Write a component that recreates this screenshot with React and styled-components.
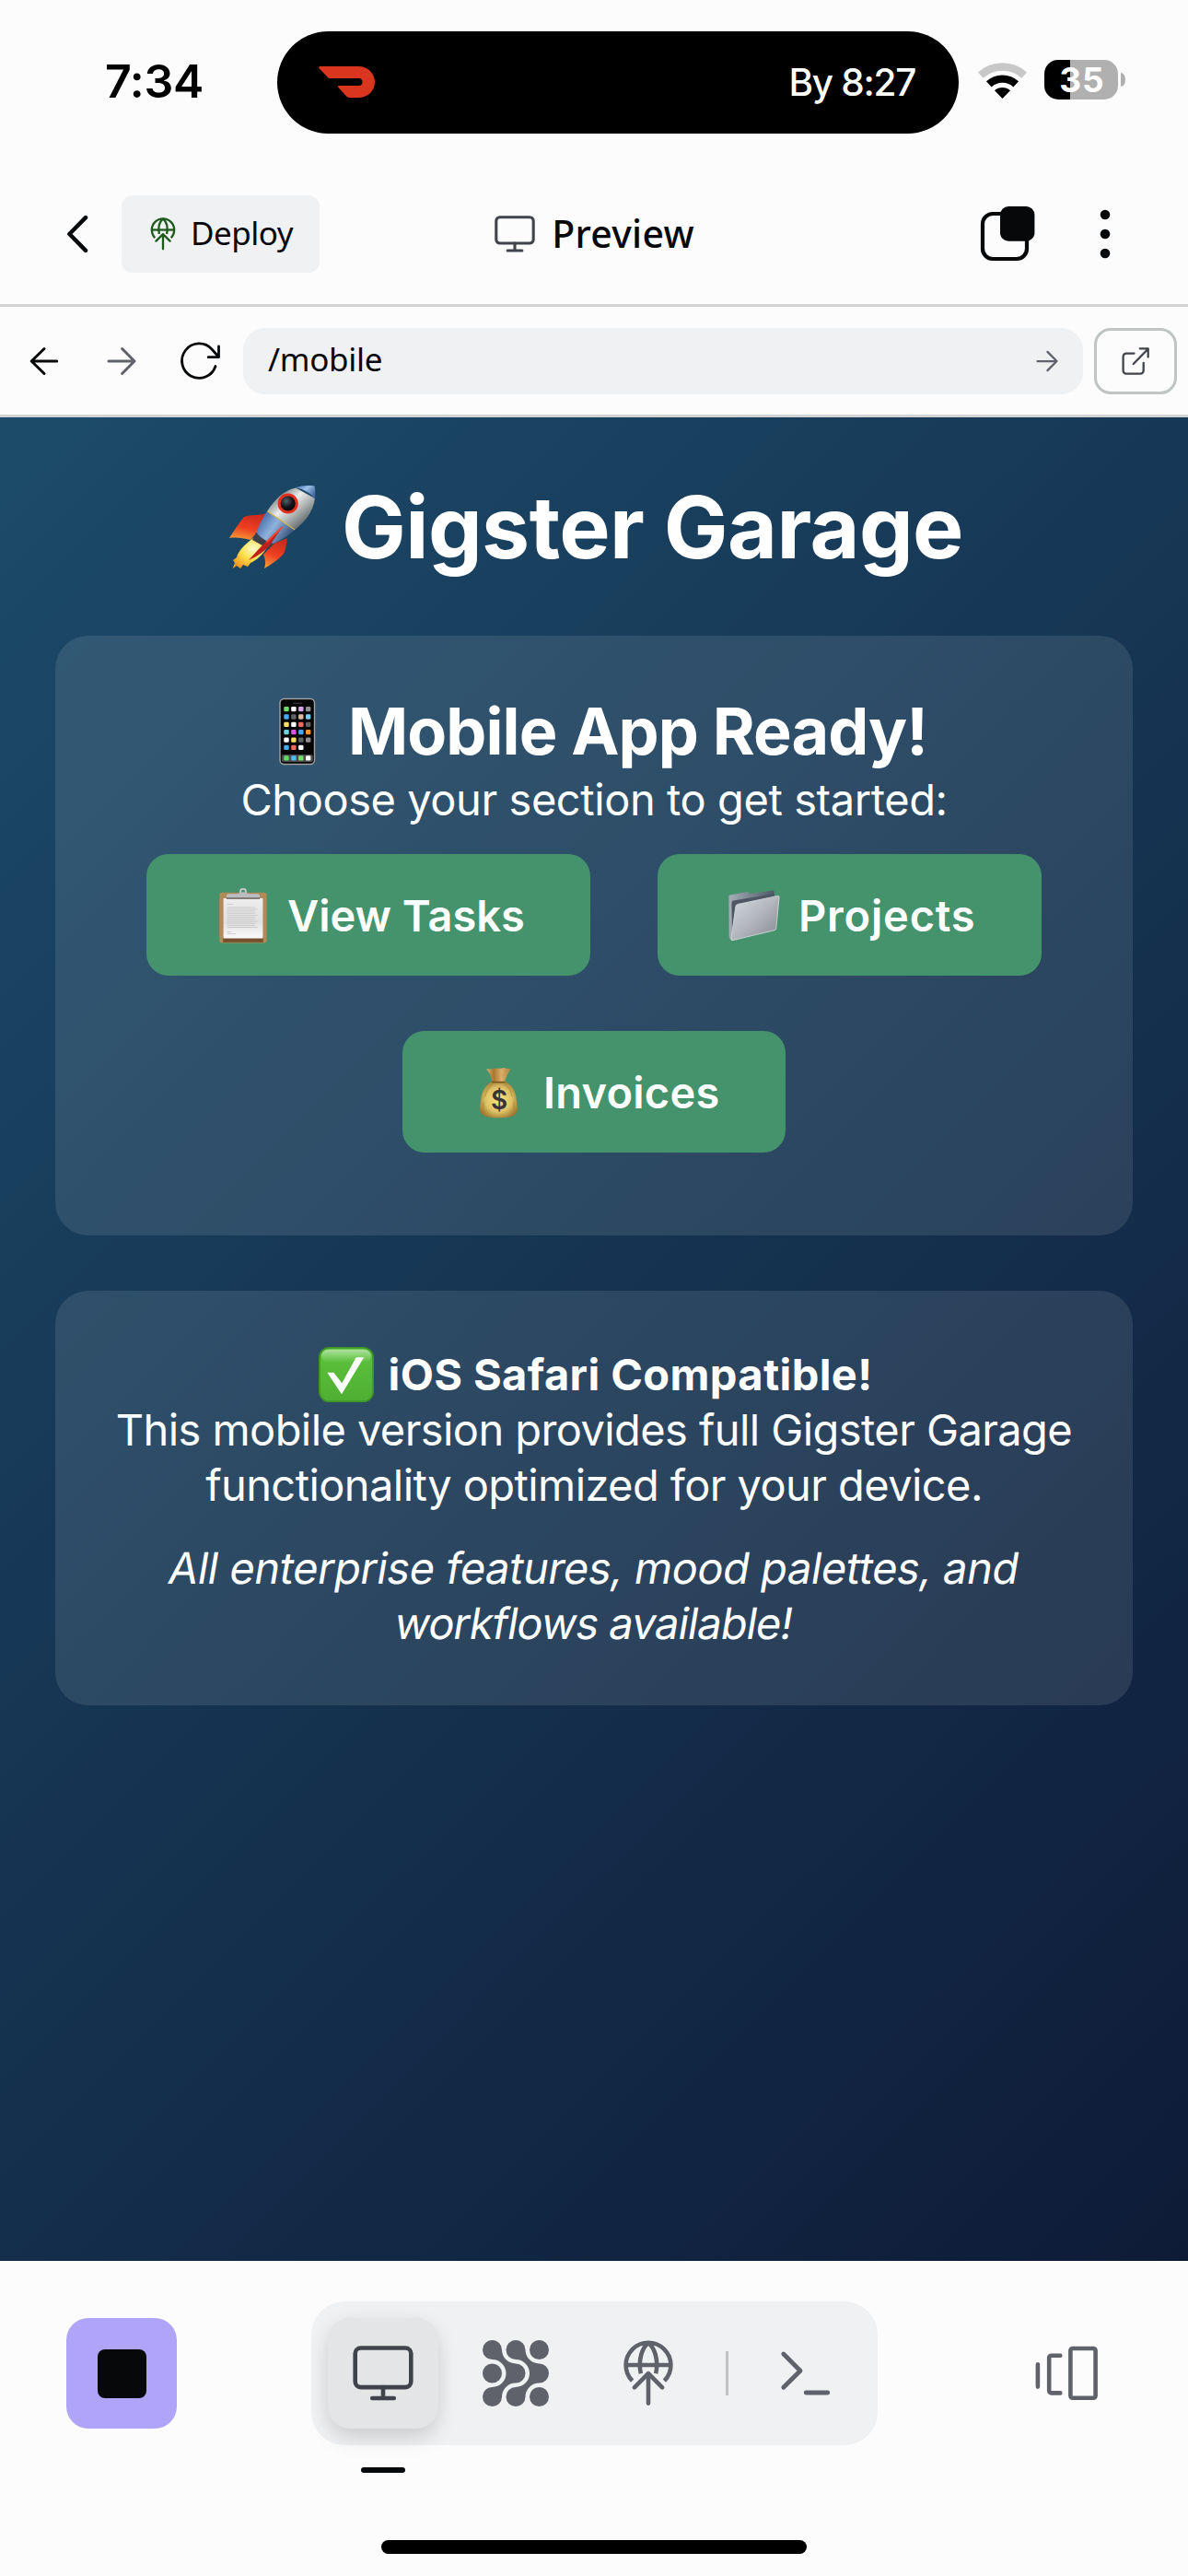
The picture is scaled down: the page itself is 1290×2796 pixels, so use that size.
import React from "react";
import styled, { createGlobalStyle } from "styled-components";

const GlobalStyle = createGlobalStyle`
  *, *::before, *::after { box-sizing: border-box; }
  body { margin: 0; background: #fcfcfc; }
  svg { display: block; flex: none; }
  h1, h2, p { margin: 0; }
  button { border: 0; padding: 0; background: none; font: inherit; color: inherit; }
`;

const SYSTEM = `Inter, "Liberation Sans", sans-serif`;
const PLEX = `"Noto Sans", "Open Sans", sans-serif`;

const Screen = styled.div`
  display: flex;
  flex-direction: column;
  width: 1290px;
  height: 2796px;
  overflow: hidden;
  background: #fcfcfc;
  color: #07080a;
  font-family: ${SYSTEM};
`;

/* ---------- status bar ---------- */

const StatusBar = styled.header`
  display: flex;
  align-items: center;
  height: 178px;
  padding-left: 114px;
`;

const Clock = styled.time`
  width: 187px;
  color: #000;
  font-size: 50px;
  font-weight: 600;
  line-height: 60px;
  letter-spacing: -0.3px;
  padding-bottom: 2px;
`;

const Island = styled.div`
  display: flex;
  align-items: center;
  justify-content: space-between;
  width: 740px;
  height: 111px;
  padding: 0 47px 0 45px;
  border-radius: 56px;
  background: #000;
  color: #fff;
  font-size: 40.5px;
  font-weight: 500;
  letter-spacing: -1.3px;
`;

const Indicators = styled.div`
  display: flex;
  align-items: center;
  gap: 19px;
  margin-left: 21px;
  padding-bottom: 5px;
`;

const Battery = styled.div`
  display: flex;
  align-items: center;
  gap: 3px;
`;

const BatteryBody = styled.div`
  width: 80px;
  height: 43px;
  padding-left: 2px;
  border-radius: 15px;
  background: linear-gradient(90deg, #000 35%, #b0b0b0 35%);
  color: #fff;
  font-size: 37px;
  font-weight: 700;
  line-height: 43px;
  letter-spacing: 1px;
  text-align: center;
`;

const BatteryTip = styled.div`
  width: 5px;
  height: 15px;
  border-radius: 0 5px 5px 0 / 0 7px 7px 0;
  background: #b0b0b0;
`;

/* ---------- app header ---------- */

const AppHeader = styled.div`
  display: grid;
  grid-template-columns: 1fr auto 1fr;
  align-items: center;
  height: 155px;
  padding: 0 54px 0 48px;
  border-bottom: 3px solid #d2d3d5;
  font-family: ${PLEX};
`;

const HeaderSide = styled.div`
  display: flex;
  align-items: center;
  justify-content: ${(p) => (p.$end ? "flex-end" : "flex-start")};
  gap: ${(p) => (p.$end ? 36 : 12)}px;
`;

const DeployButton = styled.button`
  display: flex;
  align-items: center;
  gap: 12px;
  width: 215px;
  height: 84px;
  padding-left: 27px;
  border-radius: 12px;
  background: #f0f1f3;
  color: #07080a;
`;

const Label = styled.span`
  font-family: ${PLEX};
  font-size: ${(p) => p.$size || 35}px;
  font-weight: ${(p) => p.$weight || 400};
  line-height: 48px;
  letter-spacing: ${(p) => p.$track || 0}px;
  padding-bottom: 3px;
`;

const PageTitle = styled.div`
  display: flex;
  align-items: center;
  gap: 16px;
  margin-left: 5px;
`;

/* ---------- address bar ---------- */

const AddressBar = styled.div`
  display: flex;
  align-items: center;
  height: 120px;
  padding: 0 12px 0 6px;
  border-bottom: 3px solid #d2d3d5;
`;

const NavButton = styled.button`
  display: grid;
  place-items: center;
  width: 84px;
  height: 72px;
`;

const UrlField = styled.div`
  display: flex;
  flex: 1;
  align-items: center;
  justify-content: space-between;
  height: 72px;
  margin: 0 12px 0 6px;
  padding: 0 21px 0 27px;
  border-radius: 24px;
  background: #f0f1f3;
`;

const OpenExternal = styled.button`
  display: grid;
  place-items: center;
  width: 90px;
  height: 72px;
  border: 3px solid #c0c4c4;
  border-radius: 18px;
`;

/* ---------- previewed page ---------- */

const Page = styled.main`
  height: 2001px;
  padding: 60px;
  background: linear-gradient(135deg, #1c4b6a, #0e1b37);
  color: #fff;
`;

const BrandTitle = styled.h1`
  display: flex;
  align-items: center;
  justify-content: center;
  gap: 28px;
  height: 118px;
  margin-bottom: 59px;
  padding-left: 3px;
  font-size: 93px;
  font-weight: 700;
  letter-spacing: -0.57px;
`;

const Card = styled.section`
  padding: ${(p) => (p.$text ? "61px 0 59px" : "60px")};
  margin-bottom: 60px;
  border-radius: 36px;
  background: rgba(255, 255, 255, 0.1);
  font-size: 47px;
  line-height: 60px;
  text-align: center;
`;

const CardTitle = styled.h2`
  display: flex;
  align-items: center;
  justify-content: center;
  gap: 11px;
  height: 88px;
  padding-right: 4px;
  font-size: 70px;
  font-weight: 700;
  letter-spacing: -0.89px;
`;

const Copy = styled.p`
  letter-spacing: ${(p) => p.$track || -0.58}px;
  margin-top: ${(p) => p.$gap || 0}px;
`;

const Line = styled.span`
  display: block;
  white-space: nowrap;
  letter-spacing: ${(p) => p.$track || -0.58}px;
`;

/* Slanted roman letterforms, without the cursive alternates of the italic face. */
const SlantedLine = styled(Line)`
  transform: skewX(-9.5deg);
`;

const StrongLine = styled.div`
  display: flex;
  align-items: center;
  justify-content: center;
  gap: 16px;
  padding-left: 3px;
  font-weight: 700;
  letter-spacing: 0.39px;
`;

const Actions = styled.div`
  display: flex;
  flex-wrap: wrap;
  justify-content: center;
  gap: 60px 73px;
  margin: 29px 0 30px;
`;

const ActionButton = styled.button`
  display: flex;
  align-items: center;
  gap: 18px;
  width: ${(p) => p.$width}px;
  height: 132px;
  padding: 1px 0 0 75px;
  border-radius: 24px;
  background: #44936c;
  color: #fff;
  font-size: 47px;
  font-weight: 600;
  line-height: 60px;
  letter-spacing: ${(p) => p.$track}px;
  white-space: nowrap;
`;

/* ---------- bottom dock ---------- */

const Footer = styled.footer`
  height: 342px;
  padding-top: 44px;
`;

const DockRow = styled.div`
  display: flex;
  align-items: center;
  padding: 0 96px 0 72px;
`;

const StopButton = styled.button`
  display: grid;
  place-items: center;
  width: 120px;
  height: 120px;
  border-radius: 24px;
  background: #b0a4f9;
`;

const StopGlyph = styled.span`
  width: 53px;
  height: 53px;
  border-radius: 8px;
  background: #07080a;
`;

const Dock = styled.nav`
  display: flex;
  align-items: center;
  gap: 24px;
  width: 615px;
  height: 156px;
  margin: 0 auto 0 146px;
  padding: 0 18px;
  border-radius: 36px;
  background: #f0f1f3;
`;

const DockTab = styled.button`
  display: grid;
  place-items: center;
  width: 120px;
  height: 120px;
  border-radius: 24px;
  color: ${(p) => (p.$active ? "#40434b" : "#5f626a")};
  background: ${(p) => (p.$active ? "#e4e5e7" : "transparent")};
  box-shadow: ${(p) =>
    p.$active ? "0 12px 24px -3px rgba(0,0,0,0.15), 0 0 24px rgba(0,0,0,0.04)" : "none"};
`;

const DockDivider = styled.span`
  width: 3px;
  height: 48px;
  background: #c0c2c4;
`;

const ActiveMark = styled.div`
  width: 48px;
  height: 6px;
  margin: 24px 0 73px 392px;
  border-radius: 3px;
  background: #07080a;
`;

const HomeBar = styled.div`
  width: 462px;
  height: 15px;
  margin: 0 auto;
  border-radius: 8px;
  background: #000;
`;

/* ---------- icons ---------- */

const Stroke = ({ size, box = 48, width = 3, color = "currentColor", children }) => (
  <svg width={size} height={size} viewBox={`0 0 ${box} ${box}`} fill="none" stroke={color}
    strokeWidth={width} strokeLinecap="round" strokeLinejoin="round" aria-hidden="true">
    {children}
  </svg>
);

const ArrowLeft = () => (
  <Stroke size={48} color="#07080a"><path d="M37.7 24H10.2M24 10.5L10.2 24L24 37.5" /></Stroke>
);
const ArrowRight = ({ size = 48 }) => (
  <Stroke size={size} color="#5f626a"><path d="M10 24H38M24.6 10.5L38 24L24.6 37.5" /></Stroke>
);
const Reload = () => (
  <Stroke size={48} color="#07080a" width={2.8}>
    <path d="M42 29.5A18.7 18.7 0 1 1 38 11L45.5 19.5M45.5 8V19.7H34.2" />
  </Stroke>
);
const ChevronBack = () => (
  <Stroke size={72} box={72} width={4.5} color="#07080a"><path d="M45 18.2L27.4 36L45 53.8" /></Stroke>
);
const External = () => (
  <Stroke size={36} box={36} width={2.3} color="#40434b">
    <path d="M16.5 9.6H8a3.4 3.4 0 0 0-3.4 3.4V28.3A3.4 3.4 0 0 0 8 31.7H23.3a3.4 3.4 0 0 0 3.4-3.4V20" />
    <path d="M15.7 21L31.4 5M22.8 4.3H31.7V13.6" />
  </Stroke>
);
const Monitor = ({ size, color }) => (
  <Stroke size={size} box={72} width={4.6} color={color}>
    <rect x="5.7" y="8.5" width="60.6" height="42.6" rx="6" />
    <path d="M36 51V63M24.2 63H47.8" />
  </Stroke>
);
const GlobeUp = ({ size, color }) => (
  <Stroke size={size} box={72} width={4.6} color={color}>
    <g strokeLinecap="butt">
      <path d="M18.6 44.2A24.4 24.4 0 1 1 53.4 44.2" />
      <path d="M11.6 27H60.4" />
      <path d="M36 2.8C29.5 8.5 24.6 20.5 27.8 36.2M36 2.8C42.5 8.5 47.4 20.5 44.2 36.2" />
    </g>
    <path d="M36 36.4V68.6M20.9 51.3L36 36.2L51.1 51.3" />
  </Stroke>
);
const CHEVRON_BLOB =
  "M10.5 0A10.5 10.5 0 0 1 21 10.5A15 15 0 0 0 36 25.5A10.5 10.5 0 0 1 36 46.5A15 15 0 0 0 21 61.5A10.5 10.5 0 1 1 10.5 51A15 15 0 0 0 10.5 21A10.5 10.5 0 0 1 10.5 0Z";
const AgentGrid = () => (
  <svg width="72" height="72" viewBox="0 0 72 72" fill="currentColor" aria-hidden="true">
    <path d={CHEVRON_BLOB} />
    <path d={CHEVRON_BLOB} transform="translate(25.5 0)" />
    <circle cx="61.5" cy="10.5" r="10.5" />
    <circle cx="10.5" cy="36" r="10.5" />
    <circle cx="61.5" cy="61.5" r="10.5" />
  </svg>
);
const Terminal = () => (
  <Stroke size={72} box={72} width={4.8}>
    <path d="M11.8 15L30 33.2L11.8 51.2M36.2 57H59.8" />
  </Stroke>
);
const Panels = () => (
  <Stroke size={72} box={72} width={4.6} color="#5f626a">
    <path d="M4.9 26.2V50.6M29.3 16.7H19.6a2.4 2.4 0 0 0-2.4 2.4V55a2.4 2.4 0 0 0 2.4 2.4H29.3" />
    <rect x="40.4" y="9" width="27.2" height="53.8" rx="2.4" />
  </Stroke>
);
const Windows = () => (
  <svg width="72" height="72" viewBox="0 0 72 72" aria-hidden="true">
    <rect x="11" y="14" width="48" height="49" rx="11" fill="none" stroke="#07080a" strokeWidth="4.2" />
    <rect x="30" y="6" width="37.4" height="37.7" rx="9" fill="#07080a" />
  </svg>
);
const Dots = () => (
  <svg width="72" height="72" viewBox="0 0 72 72" fill="#07080a" aria-hidden="true">
    <circle cx="36" cy="15" r="5.3" /><circle cx="36" cy="36" r="5.3" /><circle cx="36" cy="57" r="5.3" />
  </svg>
);
const Dash = () => (
  <svg width="61" height="34" viewBox="0 0 61 34" aria-hidden="true">
    <path fill="#d9351f" d="M2 0H43C54 0 61 8 61 17S54 34 43 34H33.5C32 34 31 33.4 30 32.3L21.5 23C20.6 22 21 21 22.3 21H43.5A4 4 0 0 0 43.5 13H13C11.5 13 10.5 12.4 9.5 11.4L.6 2.2C-.4 1.2 .2 0 2 0Z" />
  </svg>
);
const Wifi = () => (
  <svg width="53" height="40" viewBox="0 0 53 40" fill="none" strokeWidth="8.4" aria-hidden="true">
    <path d="M2.8 14.6A35.4 35.4 0 0 1 50.2 14.6" stroke="#c8c8c8" />
    <path d="M11.8 24.4A21.6 21.6 0 0 1 41.2 24.4" stroke="#000" />
    <path d="M26.5 40L18 31.2A12.6 12.6 0 0 1 35 31.2Z" fill="#000" />
  </svg>
);

/* ---------- pictographs ---------- */

const Rocket = () => (
  <svg width="96" height="96" viewBox="0 0 96 96" aria-hidden="true">
    <defs>
      <linearGradient id="hull" x1="0.2" y1="0.25" x2="0.75" y2="0.8">
        <stop offset="0" stopColor="#8d9594" /><stop offset=".35" stopColor="#e9ecea" />
        <stop offset=".65" stopColor="#b3b9b8" /><stop offset="1" stopColor="#6f7778" />
      </linearGradient>
      <linearGradient id="belly" x1="0" y1="0.2" x2="1" y2="0.8">
        <stop offset="0" stopColor="#355d9c" /><stop offset=".45" stopColor="#8fb2dd" />
        <stop offset="1" stopColor="#263c63" />
      </linearGradient>
      <linearGradient id="nose" x1="0" y1="0" x2="1" y2="0.6">
        <stop offset="0" stopColor="#3f6cae" /><stop offset=".5" stopColor="#9dc0e6" />
        <stop offset="1" stopColor="#41659d" />
      </linearGradient>
      <linearGradient id="fin" x1="0.6" y1="0" x2="0.3" y2="1">
        <stop offset="0" stopColor="#c92a1e" /><stop offset=".55" stopColor="#ee3e22" />
        <stop offset="1" stopColor="#f79a35" />
      </linearGradient>
      <radialGradient id="flame" cx=".6" cy=".35" r=".7">
        <stop offset="0" stopColor="#fffbd0" /><stop offset=".5" stopColor="#fbe04b" />
        <stop offset="1" stopColor="#f39a24" />
      </radialGradient>
      <radialGradient id="glass" cx=".4" cy=".35" r=".7">
        <stop offset="0" stopColor="#5a5f66" /><stop offset=".5" stopColor="#14161a" /><stop offset="1" stopColor="#000" />
      </radialGradient>
    </defs>
    <path fill="url(#flame)" d="M28 60C20 66 12 73 10 81L6 84L8 87L5.5 93L10 90L14 93L17 89L22 91L25 87C32 84 39 77 43 70Z" />
    <path fill="url(#fin)" d="M42 33C34 36 26 34 18 37C13 43 7 52 2 60C9 59 17 60 25 62L33 53Z" />
    <path fill="url(#fin)" d="M50 66L65 60C64 68 63 73 61 77C55 84 48 88 40 93C42 87 41 83 39 78Z" />
    <path fill="#3c4048" d="M31 54L51 66L45 72L27 62Z" />
    <path fill="url(#belly)" d="M43 31L73 51C67 57 59 62 50 66C43 64 36 60 31.5 54C34 46 38 38 43 31Z" />
    <path fill="url(#hull)" d="M43 31C51 18 62 8 74 5.5L95 17C93 31 85 42 73 51Z" />
    <path fill="url(#nose)" d="M74 5.5C80 3 88 2.5 94.5 3.5C95.6 8 95.6 12.5 95 18C90 11 83 7 74 5.5Z" />
    <path fill="none" stroke="#d6b648" strokeWidth="1.2" d="M43.5 31L73 51" />
    <circle cx="65.7" cy="22.5" r="9.6" fill="url(#glass)" stroke="#e2301f" strokeWidth="3" />
    <path fill="#c11f1c" d="M60 47C51 55 37 68 23 84C33 80 42 73 48 65Z" />
    <path fill="none" stroke="#ee4a34" strokeWidth="1.8" strokeLinecap="round" d="M59 48.5L43 64" />
  </svg>
);

const APP_COLORS = [
  ["#6fdc6a", "#ffffff", "#d6a4ea", "#8e8e93"],
  ["#4aa8f2", "#636366", "#dcbc9c", "#74cdf2"],
  ["#ffe066", "#ffffff", "#f06a60", "#636366"],
  ["#6cd3dc", "#d458dc", "#4aa8f2", "#f39431"],
  ["#ffffff", "#ffe066", "#636366", "#8e8e93"],
  ["#4aa8f2", "#f06a60", "#ffffff"],
];
const DOCK_COLORS = ["#62d966", "#52bbf3", "#7ade66", "#ffffff"];

const Phone = () => (
  <svg width="88" height="88" viewBox="0 0 88 88" aria-hidden="true">
    <rect x="25" y="8.5" width="37.5" height="71" rx="4.5" fill="#050505" stroke="#a0a0a3" strokeWidth="1.4" />
    <rect x="39" y="12.5" width="10" height="1.8" rx=".9" fill="#2a2a2c" />
    <rect x="26.8" y="69" width="34" height="8" rx="2" fill="#4b4b4d" />
    {APP_COLORS.map((row, r) =>
      row.map((c, i) => (
        <rect key={`${r}-${i}`} x={29.3 + i * 7.9} y={17 + r * 8.35} width="5.4" height="5.3" rx="1.3" fill={c} />
      ))
    )}
    {DOCK_COLORS.map((c, i) => (
      <rect key={i} x={29.3 + i * 7.9} y="70.2" width="5.4" height="5.4" rx="1.3" fill={c} />
    ))}
  </svg>
);

const NOTE_LINES = [21, 23, 25, 27.2, 29.4, 31.6, 33.8, 36, 38.2, 40.4, 42.6];

const Clipboard = () => (
  <svg width="60" height="60" viewBox="0 0 60 60" aria-hidden="true">
    <defs>
      <linearGradient id="paper" x1="0" y1="0" x2="0" y2="1">
        <stop offset="0" stopColor="#eeeeee" /><stop offset=".6" stopColor="#e0e0e0" /><stop offset="1" stopColor="#fbfbfb" />
      </linearGradient>
    </defs>
    <rect x="4.2" y="4.7" width="51.4" height="54.8" rx="3" fill="#b18b57" />
    <rect x="8.2" y="53" width="43.6" height="5.8" fill="#75502d" />
    <rect x="8.6" y="11" width="42.8" height="43.5" fill="url(#paper)" />
    <path d="M12.5 17.5H19M12.5 47.6H17M12.5 49.6H22" stroke="#c4c4c4" strokeWidth=".8" />
    {NOTE_LINES.map((y, i) => (
      <path key={y} d={`M12.5 ${y}H${i % 3 === 1 ? 45.5 : 43}`} stroke="#cbcbcb" strokeWidth="1" />
    ))}
    <circle cx="30" cy="3.8" r="3" fill="none" stroke="#c3c7cb" strokeWidth="2" />
    <path fill="#b9bdc1" d="M12 11V8.2C12 6.8 13.5 6.2 15 6.2H24C26 6.2 26.5 4.5 27.5 4.5H32.5C33.5 4.5 34 6.2 36 6.2H45C46.5 6.2 48 6.8 48 8.2V11Z" />
    <rect x="12" y="10.3" width="36" height="1.5" fill="#6b6256" />
  </svg>
);

const Folder = () => (
  <svg width="60" height="60" viewBox="0 0 60 60" aria-hidden="true">
    <defs>
      <linearGradient id="front" x1=".1" y1=".1" x2=".9" y2=".9">
        <stop offset="0" stopColor="#cdd3db" /><stop offset=".5" stopColor="#b3b7bc" /><stop offset="1" stopColor="#8d9198" />
      </linearGradient>
      <linearGradient id="back" x1="0" y1="0" x2="1" y2="0">
        <stop offset="0" stopColor="#a5adb6" /><stop offset="1" stopColor="#4f5a66" />
      </linearGradient>
    </defs>
    <path fill="url(#back)" d="M2.4 9.2Q2.4 7.9 3.7 7.6L22.5 4Q24.2 3.8 24.3 6.3L50 2.6Q51.6 2.5 51.6 4.3V44L5 56.5Q2.8 55 2.7 52Z" />
    <path fill="#4c5763" d="M5.5 15.5Q5.5 14 7.5 13.6L51.6 6V12L12 20L6 53Z" />
    <path fill="url(#front)" stroke="#d9dde2" strokeWidth=".8" d="M9.8 20Q10 18 12 17.5L55.5 8.4Q57.3 8.2 57.1 10L53.8 43.5Q53.6 45.3 52 45.7L7 56.6Q4.8 57 5 54.8Z" />
  </svg>
);

const MoneyBag = () => (
  <svg width="60" height="60" viewBox="0 0 60 60" aria-hidden="true">
    <defs>
      <radialGradient id="bag" cx=".5" cy=".5" r=".56">
        <stop offset="0" stopColor="#f6e384" /><stop offset=".6" stopColor="#dfc466" /><stop offset="1" stopColor="#9f772f" />
      </radialGradient>
      <linearGradient id="ruffle" x1="0" y1="0" x2="1" y2="0">
        <stop offset="0" stopColor="#d9b273" /><stop offset=".3" stopColor="#a9762f" />
        <stop offset=".6" stopColor="#d8ae69" /><stop offset="1" stopColor="#b0813c" />
      </linearGradient>
    </defs>
    <path fill="url(#ruffle)" d="M16.2 4.5C19 3.6 21.5 5 24 4C27 2.5 31 5 34 3C37 2.6 40 5 43 4C40 8 37 13 36 19H22.5C22 13 19.5 8 16.2 4.5Z" />
    <path fill="url(#bag)" d="M22 18H36.5C42 20 47.5 27 48.5 35C49 41 50.5 46 50.2 50C47 56 41 57.3 29.5 57.3C18 57.3 12 56 8.8 50C8.5 46 10 41 10.5 35C11.5 27 17 20 22 18Z" />
    <path d="M22 18.6H36.5" stroke="#7b5320" strokeWidth="1.6" />
    <path d="M24 20C19 23 16 28 15 34M35 20C40 23 43 28 44 34M13 40C12.5 45 13 49 14.5 52M46 40C46.5 45 46 49 44.5 52" fill="none" stroke="#a8833a" strokeOpacity=".6" strokeWidth="1.2" />
    <text x="30" y="48.3" textAnchor="middle" fontFamily="Inter, sans-serif" fontSize="28" fontWeight="600" letterSpacing="0" fill="#3b3336">$</text>
  </svg>
);

const CheckMark = () => (
  <svg width="60" height="60" viewBox="0 0 60 60" aria-hidden="true">
    <defs>
      <linearGradient id="tile" x1="0" y1="0" x2="0" y2="1">
        <stop offset="0" stopColor="#5cc43d" /><stop offset="1" stopColor="#4fae31" />
      </linearGradient>
      <linearGradient id="gloss" x1="0" y1="0" x2="0" y2="1">
        <stop offset="0" stopColor="#fff" stopOpacity=".5" /><stop offset="1" stopColor="#fff" stopOpacity="0" />
      </linearGradient>
    </defs>
    <rect x=".9" y=".9" width="58.2" height="58.2" rx="10.5" fill="url(#tile)" stroke="#3f9427" strokeWidth="1.8" />
    <rect x="3" y="2.8" width="54" height="14" rx="8" fill="url(#gloss)" />
    <path fill="#fff" d="M9.3 27.7H16.4L25.3 39.3L40 12.5Q40.8 11.3 42.2 11.3H49.2L25 51.3Z" />
  </svg>
);

/* ---------- screen ---------- */

const ACTIONS = [
  { label: "View Tasks", Icon: Clipboard, width: 482, track: 0 },
  { label: "Projects", Icon: Folder, width: 417, track: 0.8 },
  { label: "Invoices", Icon: MoneyBag, width: 416, track: 0.24 },
];

export default function App() {
  return (
    <Screen>
      <GlobalStyle />
      <StatusBar>
        <Clock>7:34</Clock>
        <Island>
          <Dash />
          <span>By 8:27</span>
        </Island>
        <Indicators>
          <Wifi />
          <Battery>
            <BatteryBody>35</BatteryBody>
            <BatteryTip />
          </Battery>
        </Indicators>
      </StatusBar>

      <AppHeader>
        <HeaderSide>
          <ChevronBack />
          <DeployButton>
            <GlobeUp size={36} color="#1f5a1c" />
            <Label $track={-0.5}>Deploy</Label>
          </DeployButton>
        </HeaderSide>
        <PageTitle>
          <Monitor size={48} color="#40434b" />
          <Label $size={41} $weight={500} $track={0.25}>Preview</Label>
        </PageTitle>
        <HeaderSide $end>
          <Windows />
          <Dots />
        </HeaderSide>
      </AppHeader>

      <AddressBar>
        <NavButton><ArrowLeft /></NavButton>
        <NavButton><ArrowRight /></NavButton>
        <NavButton><Reload /></NavButton>
        <UrlField>
          <Label $track={-0.3}>/mobile</Label>
          <ArrowRight size={36} />
        </UrlField>
        <OpenExternal><External /></OpenExternal>
      </AddressBar>

      <Page>
        <BrandTitle>
          <Rocket />
          <span>Gigster Garage</span>
        </BrandTitle>
        <Card>
          <CardTitle>
            <Phone />
            <span>Mobile App Ready!</span>
          </CardTitle>
          <Copy $track={-0.43}>Choose your section to get started:</Copy>
          <Actions>
            {ACTIONS.map(({ label, Icon, width, track }) => (
              <ActionButton key={label} $width={width} $track={track}>
                <Icon />
                {label}
              </ActionButton>
            ))}
          </Actions>
        </Card>
        <Card $text>
          <StrongLine>
            <CheckMark />
            <span>iOS Safari Compatible!</span>
          </StrongLine>
          <Copy>
            <Line>This mobile version provides full Gigster Garage</Line>
            <Line>functionality optimized for your device.</Line>
          </Copy>
          <Copy $gap={30}>
            <SlantedLine $track={-0.46}>All enterprise features, mood palettes, and</SlantedLine>
            <SlantedLine $track={-1}>workflows available!</SlantedLine>
          </Copy>
        </Card>
      </Page>

      <Footer>
        <DockRow>
          <StopButton><StopGlyph /></StopButton>
          <Dock>
            <DockTab $active><Monitor size={72} /></DockTab>
            <DockTab><AgentGrid /></DockTab>
            <DockTab><GlobeUp size={72} /></DockTab>
            <DockDivider />
            <DockTab><Terminal /></DockTab>
          </Dock>
          <Panels />
        </DockRow>
        <ActiveMark />
        <HomeBar />
      </Footer>
    </Screen>
  );
}
